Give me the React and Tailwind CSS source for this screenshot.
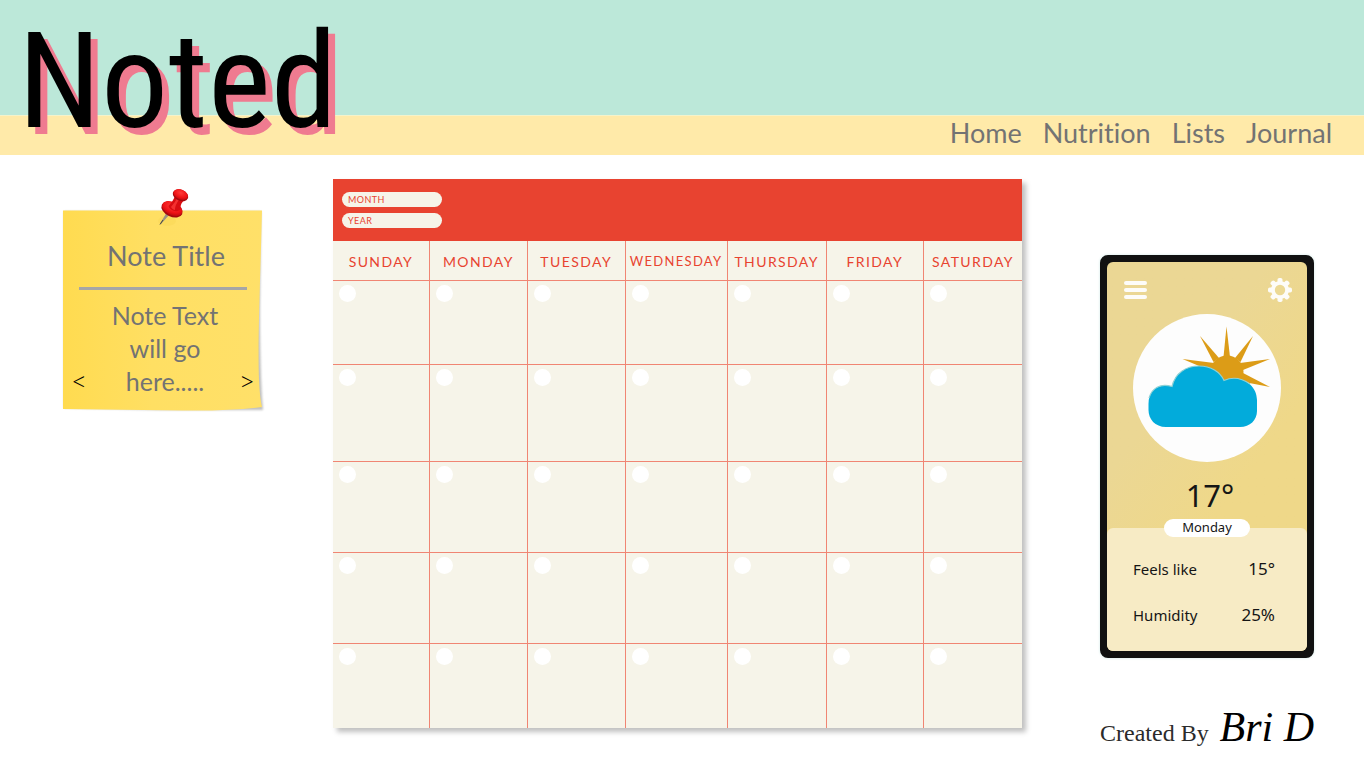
import React from "react";

const DAYS = [
  { name: "SUNDAY", size: "text-[14px]", width: "w-[14%]" },
  { name: "MONDAY", size: "text-[14px]", width: "w-[14.2%]" },
  { name: "TUESDAY", size: "text-[14px]", width: "w-[14.2%]" },
  { name: "WEDNESDAY", size: "text-[13px]", width: "w-[14.8%]" },
  { name: "THURSDAY", size: "text-[14px]", width: "w-[14.4%]" },
  { name: "FRIDAY", size: "text-[14px]", width: "w-[14.1%]" },
  { name: "SATURDAY", size: "text-[14px]", width: "w-[14.3%]" },
];

const WEEKS = ["h-[84px]", "h-[97px]", "h-[91px]", "h-[91px]", "h-[85px]"];

const LINKS = ["Home", "Nutrition", "Lists", "Journal"];

function Header() {
  return (
    <header className="relative mr-0.5">
      <div className="h-[115px] bg-[#bce8d9]" />
      <nav
        aria-label="Main"
        className="flex h-10 items-center justify-end gap-[21px] border-t border-[#f4f3cb] bg-[#ffeaa9] pr-8 pb-1 text-[27px] text-[#737373]"
      >
        {LINKS.map((name) => (
          <a key={name} href={"#" + name.toLowerCase()}>
            {name}
          </a>
        ))}
      </nav>
      <h1 className="absolute top-0 left-[18px] font-['Roboto_Condensed','Open_Sans_Condensed','Noto_Sans_Condensed','Lato',sans-serif] text-[134px] leading-[164px] text-black [text-shadow:7px_7px_0_#ef7b90]">
        Noted
      </h1>
    </header>
  );
}

function Pin() {
  return (
    <svg
      viewBox="0 0 32 38"
      className="absolute top-[-22px] left-[95px] h-[38px] w-8"
      aria-hidden="true"
    >
      <defs>
        <radialGradient id="pinHead" cx="0.45" cy="0.35" r="0.75">
          <stop offset="0" stopColor="#ff3b38" />
          <stop offset="0.6" stopColor="#ee1215" />
          <stop offset="1" stopColor="#a9090d" />
        </radialGradient>
      </defs>
      <ellipse cx="9" cy="33" rx="9" ry="5" fill="#d9a900" opacity="0.07" />
      <path d="M9 24 L12 26 L3 36 L2 35.500 Z" fill="#9b9380" />
      <path d="M2 36.500 L5 32" stroke="#4f4a3c" strokeWidth="1" />
      <ellipse cx="14" cy="21.500" rx="11.200" ry="7.200" transform="rotate(25 14 21.500)" fill="#a5080c" />
      <ellipse cx="14.300" cy="20.500" rx="10.800" ry="6.500" transform="rotate(25 14.300 20.500)" fill="url(#pinHead)" />
      <path d="M17 7 C16 12 13 15 10.500 18 C12 23 20 25 22.500 21 C22 17 24 14 26.500 12 Z" fill="#d90d12" />
      <path d="M19 9 C18 14 15 16 13 19 C14 21 16 22 17 22 C17 17 20 13 22 11 Z" fill="#ff403c" opacity="0.7" />
      <ellipse cx="22.500" cy="7.300" rx="8" ry="5.500" transform="rotate(24 22.500 7.300)" fill="#a5080c" />
      <ellipse cx="22.700" cy="6.500" rx="7.600" ry="4.900" transform="rotate(24 22.700 6.500)" fill="url(#pinHead)" />
    </svg>
  );
}

function StickyNote() {
  return (
    <section className="relative mt-[55px] mr-[70px] h-[200px] w-[200px] shrink-0">
      <svg viewBox="0 0 200 202" className="absolute top-0 left-0 w-full overflow-visible" aria-hidden="true">
        <defs>
          <linearGradient id="paper" x1="0" x2="1">
            <stop offset="0" stopColor="#ffdb50" />
            <stop offset="0.45" stopColor="#ffdf63" />
            <stop offset="1" stopColor="#ffe069" />
          </linearGradient>
          <filter id="soft" x="-5%" y="-5%" width="110%" height="110%">
            <feGaussianBlur stdDeviation="1" />
          </filter>
        </defs>
        <path d="M1 1.500 H198 L197 100 Q197 165 200 200 L100 200 L1 198 Z" fill="#5f5f5f" opacity="0.4" filter="url(#soft)" />
        <path d="M0 0.500 H199 C197.500 65 194.500 130 196 170 Q197 190 199 197 Q170 201 120 200.500 L0 199 Z" fill="url(#paper)" />
      </svg>
      <Pin />
      <div className="relative flex flex-col items-center px-4 pt-[27px] text-[#737373]">
        <h2 className="pl-1.5 text-[27px] leading-[38px]">Note Title</h2>
        <hr className="mt-3 w-full border-t-[3px] border-[#a6a6a6]" />
        <p className="mt-[9px] w-[128px] pl-1 text-center text-[25px] leading-[33px]">Note Text will go here.....</p>
      </div>
      <button type="button" aria-label="Previous note" className="absolute bottom-3.5 left-2 text-[28px] leading-[32px] font-light text-black">
        &lt;
      </button>
      <button type="button" aria-label="Next note" className="absolute right-2 bottom-3.5 text-[28px] leading-[32px] font-light text-black">
        &gt;
      </button>
    </section>
  );
}

function Field({ id, label }) {
  return (
    <div className="flex h-[15px] w-[100px] items-center gap-1 rounded-full bg-[#f6f4e9] px-1.5 text-[9px] tracking-wider text-[#e84330]">
      <label htmlFor={id}>{label}</label>
      <input id={id} type="text" className="h-3 w-full min-w-0 bg-transparent outline-none" />
    </div>
  );
}

function Calendar() {
  return (
    <section className="mt-6 min-w-0 flex-1 bg-[#f6f4e9] shadow-[4px_4px_5px_rgba(0,0,0,0.25)]">
      <div className="flex h-[62px] flex-col gap-1.5 bg-[#e84330] py-[13px] pl-[9px]">
        <Field id="month" label="MONTH" />
        <Field id="year" label="YEAR" />
      </div>
      <table className="w-full table-fixed border-collapse">
        <thead>
          <tr className="h-[39px]">
            {DAYS.map((day) => (
              <th
                key={day.name}
                scope="col"
                className={
                  day.width + " " + day.size +
                  " border-r border-b border-[#f08573] p-0 pt-0.5 text-center font-normal tracking-widest text-[#e84330] last:border-r-0"
                }
              >
                {day.name}
              </th>
            ))}
          </tr>
        </thead>
        <tbody>
          {WEEKS.map((height, week) => (
            <tr key={week} className={height}>
              {DAYS.map((day) => (
                <td
                  key={day.name}
                  className={
                    "border-r border-[#f08573] p-0 px-[6px] pt-1 align-top last:border-r-0 " +
                    (week < 4 ? "border-b" : "")
                  }
                >
                  <span className="block size-[17px] rounded-full bg-white" />
                </td>
              ))}
            </tr>
          ))}
        </tbody>
      </table>
    </section>
  );
}

function Gear() {
  return (
    <svg viewBox="0 0 24 24" className="size-6" aria-hidden="true">
      <g fill="#fdfcf8">
        {[0, 45, 90, 135].map((angle) => (
          <rect key={angle} x="9.500" y="0" width="5" height="24" rx="1.800" transform={`rotate(${angle} 12 12)`} />
        ))}
        <circle cx="12" cy="12" r="9" />
      </g>
      <circle cx="12" cy="12" r="5.200" fill="#ecd994" />
    </svg>
  );
}

function SunAndCloud() {
  return (
    <svg viewBox="0 0 148 148" className="mx-auto size-[148px]" aria-hidden="true">
      <circle cx="74" cy="74" r="74" fill="#fdfdfd" />
      <g fill="#dc9c17">
        <circle cx="94" cy="58" r="16.500" />
        <path d="M90.500 43 L93.500 12.500 L97 43 Z" />
        <path d="M102 44 L120 22 L107.500 48 Z" />
        <path d="M86 44 L67 22 L80.500 48 Z" />
        <path d="M107 49 L137 45 L110 56 Z" />
        <path d="M81 49 L49.500 45 L78 57 Z" />
        <path d="M110 59 L137 73 L106 67 Z" />
      </g>
      <path
        d="M33 113 C22 113 15.500 105 15.500 96 V90 C15.500 76 26 69 39 72.500 C42 59 53 52 66 52 C78 52 87 58 91 66.500 C107 60 124 70 124 86 V97 C124 106 117 113 107 113 Z"
        fill="#02abdb"
      />
      <path d="M16 84 C19 74 27 69 39 72.500 C42 59 53 52 66 52 C78 52 87 58 91 66.500 C101 62 110 65 117 70" fill="none" stroke="#8ed1d5" strokeWidth="1.200" />
    </svg>
  );
}

function Weather() {
  return (
    <section className="flex flex-col rounded-lg border-[7px] border-[#111111] bg-[#111111] font-['Noto_Sans',sans-serif] text-[#151515] shadow-[0_0_3px_#cfe9e6]">
      <div className="rounded-t-md bg-linear-to-br from-[#ebd794] from-40% to-[#efd889] to-75%">
        <div className="flex items-center justify-between px-[15px] pt-4">
          <button type="button" aria-label="Menu" className="flex h-6 w-6 flex-col justify-center gap-[3px] pl-[2px]">
            <span className="h-1 w-[23px] rounded-full bg-[#fdfcf8]" />
            <span className="h-1 w-[23px] rounded-full bg-[#fdfcf8]" />
            <span className="h-1 w-[23px] rounded-full bg-[#fdfcf8]" />
          </button>
          <button type="button" aria-label="Settings">
            <Gear />
          </button>
        </div>
        <div className="pt-3">
          <SunAndCloud />
        </div>
        <p className="pt-3 pb-3 pl-1.5 text-center text-[31px] leading-[42px]">17°</p>
      </div>
      <div className="rounded-b-md bg-[#efd889]">
        <div className="flow-root rounded-md bg-[#f7ebc5]">
          <p className="relative mx-auto -mt-[9px] h-[18px] w-[86px] rounded-full bg-white text-center text-[13px] leading-4">Monday</p>
          <dl className="flex flex-col gap-[22px] px-[26px] pt-5 pb-6 text-[15px] leading-6">
            <div className="flex items-center justify-between pr-[6px]">
              <dt>Feels like</dt>
              <dd className="text-[17px]">15°</dd>
            </div>
            <div className="flex items-center justify-between pr-[6px]">
              <dt>Humidity</dt>
              <dd className="text-[17px]">25%</dd>
            </div>
          </dl>
        </div>
      </div>
    </section>
  );
}

export default function App() {
  return (
    <div className="bg-white font-['Lato',sans-serif] [font-variant-ligatures:none]">
      <Header />
      <main className="flex items-start pr-[52px] pl-[63px]">
        <StickyNote />
        <Calendar />
        <aside className="mt-[100px] ml-[78px] w-[214px] shrink-0">
          <Weather />
          <footer className="mt-11 flex items-baseline justify-between font-['Liberation_Serif',serif] whitespace-nowrap text-black">
            <span className="text-[24px] leading-[50px] text-[#2b2b2b]">Created By</span>
            <span className="text-[42px] leading-[50px] italic">Bri D</span>
          </footer>
        </aside>
      </main>
    </div>
  );
}
